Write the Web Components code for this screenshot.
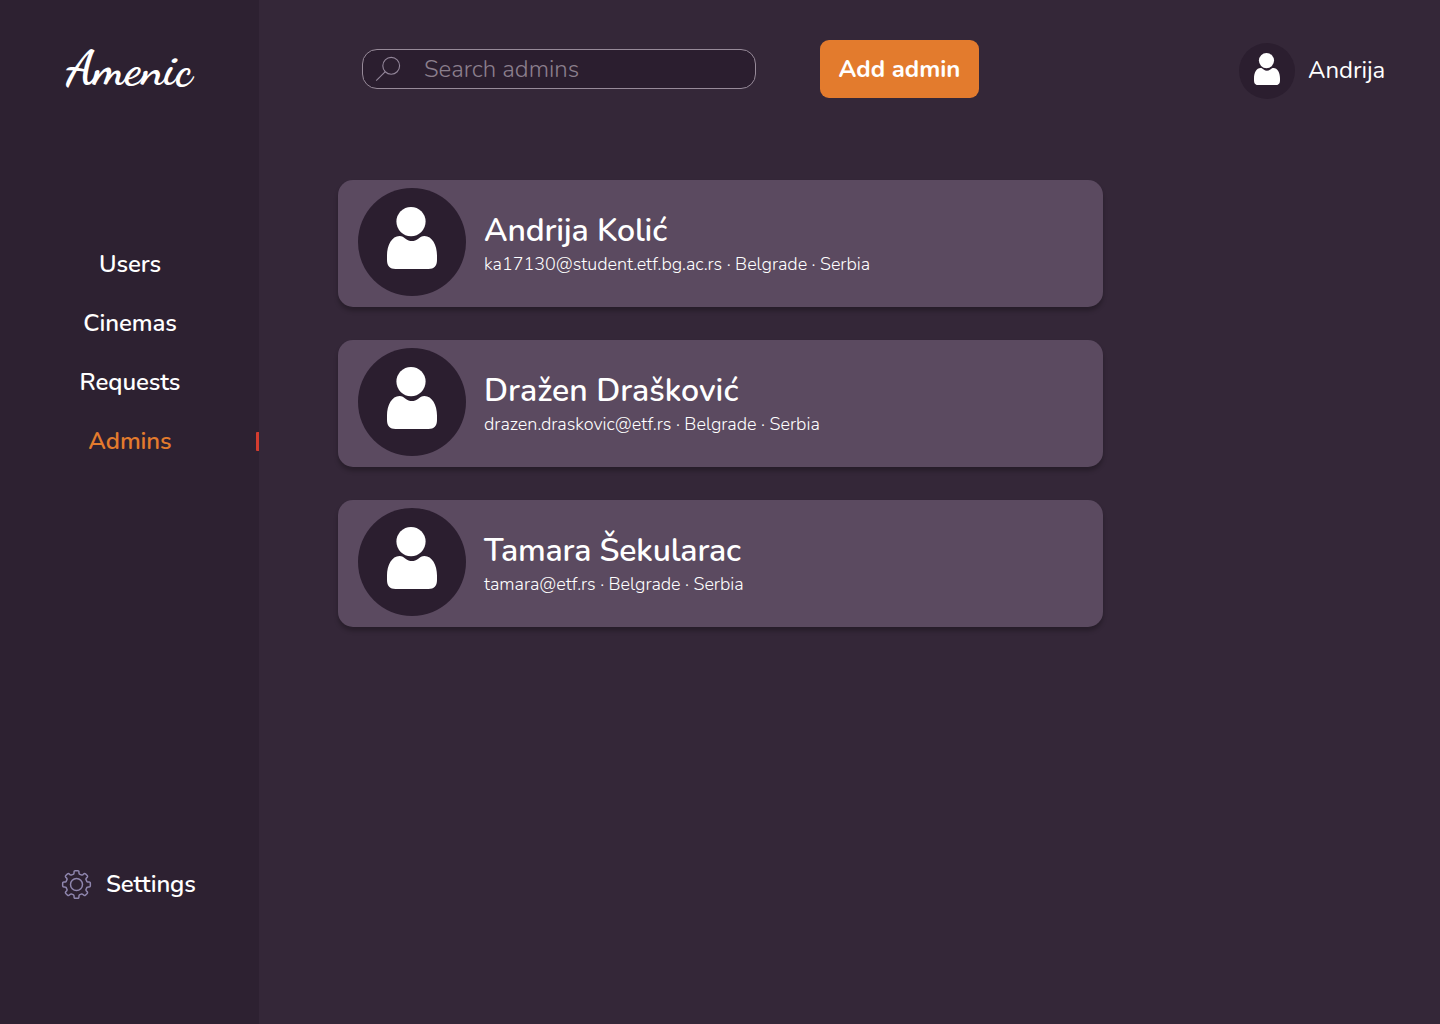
<!DOCTYPE html>
<html lang="en">
<head>
<meta charset="utf-8">
<title>Amenic</title>
<style>
html,body{margin:0;height:100%;background:#342738}
body{font-family:Nunito,Lato,"Open Sans",sans-serif;color:#fff;overflow:hidden}
</style>
</head>
<body>
<amenic-app></amenic-app>
<script>
class UiElement extends HTMLElement {
  constructor() {
    super();
    this.attachShadow({ mode: 'open' });
  }
  connectedCallback() {
    this.shadowRoot.innerHTML = this.render();
  }
  render() { return ''; }
}

/* Single unwrapped line of text. */
customElements.define('text-line', class extends UiElement {
  render() {
    return `<style>
      :host{display:block;white-space:nowrap;flex:none;line-height:1.2}
    </style><slot></slot>`;
  }
});

customElements.define('user-avatar', class extends UiElement {
  render() {
    return `<style>
      :host{display:flex;justify-content:center;width:var(--size);height:var(--size);border-radius:50%;background:#2b1e2f;flex:none}
      svg{width:var(--glyph);height:calc(var(--glyph) * 1.24);margin-top:var(--top);fill:#fff}
    </style>
    <svg viewBox="0 0 50 62"><circle cx="24" cy="14.6" r="14.6"/>
    <path d="M12.5 29C5 29 0 38 0 48.500V53C0 59 3 62 8.500 62H41.500C47 62 50 59 50 53V48.500C50 38 45 29 37.500 29C35 29 33 30.300 31.300 31.700C27.200 34.900 22.500 34.900 18.500 31.700C16.800 30.300 15 29 12.500 29Z"/></svg>`;
  }
});

customElements.define('gear-icon', class extends UiElement {
  render() {
    const at = (r, a) => (15.5 + r * Math.sin(a)).toFixed(2) + ' ' + (15.5 - r * Math.cos(a)).toFixed(2);
    let d = '';
    for (let i = 0; i < 8; i++) {
      const c = i * Math.PI / 4;
      d += (i ? 'L' : 'M') + at(10.8, c - .27) + 'Q' + at(11.5, c - .2) + ' ' + at(12.8, c - .19)
        + 'Q' + at(14, c - .18) + ' ' + at(13.9, c - .09) + 'L' + at(13.9, c + .09)
        + 'Q' + at(14, c + .18) + ' ' + at(12.8, c + .19) + 'Q' + at(11.5, c + .2) + ' ' + at(10.8, c + .27);
    }
    return `<style>:host{display:block;width:30px;height:30px;flex:none}svg{display:block;fill:none;stroke:#8f86ae;stroke-width:1.5;stroke-linejoin:round}</style>
    <svg width="31" height="31" viewBox="0 0 31 31"><path d="${d}Z"/><circle cx="15.5" cy="15.5" r="6"/></svg>`;
  }
});

customElements.define('nav-item', class extends UiElement {
  render() {
    return `<style>
      :host{display:flex;height:59px;align-items:center;justify-content:center;box-sizing:border-box;padding-left:1px;position:relative;font-size:24px;font-weight:600;letter-spacing:-.08px}
      :host([active]){color:#e37b2d}
      :host([active])::after{content:"";position:absolute;right:0;top:20px;width:3px;height:19px;background:#d43c2f;border-radius:1px 0 0 1px}
    </style><text-line>${this.getAttribute('label')}</text-line>`;
  }
});

customElements.define('side-bar', class extends UiElement {
  render() {
    return `<style>
      :host{display:flex;flex-direction:column;width:259px;height:1024px;box-sizing:border-box;background:#2d2131;flex:none}
      .logo{height:138px;padding:40px 0 0 66px;box-sizing:border-box;font:700 48px/1 "Dancing Script","Liberation Serif",serif}
      nav{padding-top:97px;flex:1}
      .settings{display:flex;align-items:center;gap:15px;padding:0 0 125px 61px;font-size:24px;font-weight:600;letter-spacing:-.1px}
    </style>
    <div class="logo"><text-line>Amenic</text-line></div>
    <nav>
      <nav-item label="Users"></nav-item>
      <nav-item label="Cinemas"></nav-item>
      <nav-item label="Requests"></nav-item>
      <nav-item label="Admins" active></nav-item>
    </nav>
    <div class="settings"><gear-icon></gear-icon><text-line>Settings</text-line></div>`;
  }
});

customElements.define('search-box', class extends UiElement {
  render() {
    return `<style>
      :host{display:flex;align-items:center;gap:22px;width:394px;height:40px;box-sizing:border-box;border:1px solid #978a99;border-radius:15px;background:#2b1e2f;padding-left:12px;color:#8b7f8d;font-size:24px;font-weight:300;flex:none}
      svg{fill:none;stroke:#93869a;stroke-width:1.1;flex:none}
    </style>
    <svg width="27" height="26" viewBox="0 0 27 26"><circle cx="16.200" cy="9.800" r="8.400"/><path d="M10.300 15.700L1.200 24.600"/></svg>
    <text-line>Search admins</text-line>`;
  }
});

customElements.define('primary-button', class extends UiElement {
  render() {
    return `<style>
      :host{display:flex;align-items:center;justify-content:center;width:159px;height:58px;border-radius:9px;background:#e37b2d;font-size:24px;font-weight:700;flex:none}
    </style><text-line><slot></slot></text-line>`;
  }
});

customElements.define('top-bar', class extends UiElement {
  render() {
    return `<style>
      :host{display:flex;align-items:center;height:138px;padding:0 55px 0 103px}
      primary-button{margin-left:64px}
      .me{display:flex;align-items:center;gap:13px;margin:4px 0 0 auto;font-size:24px}
      .me text-line{padding-bottom:2px;width:77px;letter-spacing:-.08px}
      user-avatar{--size:56px;--glyph:26px;--top:10px}
    </style>
    <search-box></search-box><primary-button>Add admin</primary-button>
    <div class="me"><user-avatar></user-avatar><text-line>Andrija</text-line></div>`;
  }
});

customElements.define('admin-card', class extends UiElement {
  render() {
    return `<style>
      :host{display:flex;width:765px;height:127px;box-sizing:border-box;padding:8px 20px;gap:18px;border-radius:15px;background:#5b4a60;box-shadow:0 4px 4px rgba(0,0,0,.25)}
      user-avatar{--size:108px;--glyph:50px;--top:19px}
      .name{font-size:32px;font-weight:600;padding-top:24px;letter-spacing:var(--name-tracking)}
      .info{font-size:18px;font-weight:300;padding-top:4px;letter-spacing:var(--info-tracking)}
    </style>
    <user-avatar></user-avatar>
    <div><text-line class="name"><slot name="name"></slot></text-line>
    <text-line class="info"><slot name="info"></slot></text-line></div>`;
  }
});

customElements.define('amenic-app', class extends UiElement {
  render() {
    return `<style>
      :host{display:flex;width:1440px;height:1024px}
      main{flex:1}
      section{display:flex;flex-direction:column;gap:33px;padding:42px 0 0 79px}
      admin-card{--name-tracking:-.15px;--info-tracking:-.035px}
      admin-card:nth-child(2){--name-tracking:.06px;--info-tracking:-.01px}
    </style>
    <side-bar></side-bar>
    <main><top-bar></top-bar>
      <section>
        <admin-card><span slot="name">Andrija Kolić</span><span slot="info">ka17130@student.etf.bg.ac.rs · Belgrade · Serbia</span></admin-card>
        <admin-card><span slot="name">Dražen Drašković</span><span slot="info">drazen.draskovic@etf.rs · Belgrade · Serbia</span></admin-card>
        <admin-card><span slot="name">Tamara Šekularac</span><span slot="info">tamara@etf.rs · Belgrade · Serbia</span></admin-card>
      </section>
    </main>`;
  }
});
</script>
</body>
</html>
